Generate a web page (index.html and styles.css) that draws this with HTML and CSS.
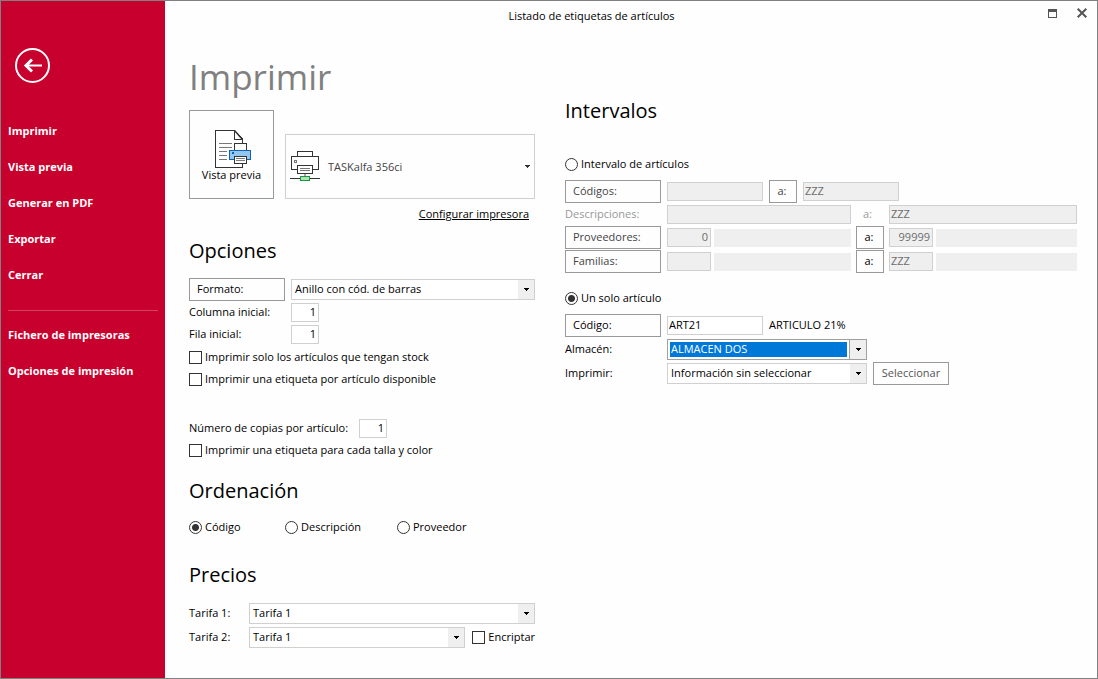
FILE: index.html
```html
<!DOCTYPE html>
<html lang="es">
<head>
<meta charset="utf-8">
<title>Listado de etiquetas de artículos</title>
<link rel="stylesheet" href="styles.css">
</head>
<body>
<div class="window">
  <aside class="sidebar">
    <button class="back" type="button" aria-label="Volver">
      <svg width="36" height="36" viewBox="0 0 36 36" fill="none" stroke="#fff">
        <circle cx="17.500" cy="17.500" r="16.500" stroke-width="2"/>
        <path d="M10 17.500H27" stroke-width="2"/>
        <path d="M17 11.500L11 17.500L17 23.500" stroke-width="3"/>
      </svg>
    </button>
    <nav class="menu">
      <a href="#">Imprimir</a>
      <a href="#">Vista previa</a>
      <a href="#">Generar en PDF</a>
      <a href="#">Exportar</a>
      <a href="#">Cerrar</a>
      <hr>
      <a href="#">Fichero de impresoras</a>
      <a href="#">Opciones de impresión</a>
    </nav>
  </aside>

  <div class="page">
    <header class="titlebar">
      <span class="caption">Listado de etiquetas de artículos</span>
      <div class="controls">
        <button type="button" aria-label="Maximizar">
          <svg width="9" height="9" viewBox="0 0 9 9" shape-rendering="crispEdges"><path d="M.5 .5h8v8h-8z" fill="none" stroke="#555"/><path d="M0 0h9v3H0z" fill="#555"/></svg>
        </button>
        <button type="button" aria-label="Cerrar">
          <svg width="10" height="10" viewBox="0 0 10 10"><path d="M.7 .7L9.300 9.300M9.300 .7L.7 9.300" stroke="#555" stroke-width="2"/></svg>
        </button>
      </div>
    </header>

    <main class="columns">
      <div class="left">
        <h1>Imprimir</h1>
        <div class="printer-row">
          <button class="preview" type="button">
            <svg width="37" height="39" viewBox="0 0 37 39" shape-rendering="crispEdges">
              <path d="M.5 .5H19L27.500 9V37.500H.5z" fill="#fff" stroke="#333"/>
              <path d="M19.500 .5V9.500H27.500" fill="#fff" stroke="#333"/>
              <path d="M19.500 .5L27.500 9.500" stroke="#333" stroke-width="1.500" shape-rendering="auto"/>
              <path d="M4 13.500H17M4 17.500H17M4 21.500H12M4 25.500H12M4 29.500H12" stroke="#777"/>
              <path d="M19.500 20.500V13.500H31.500V20.500" fill="#fff" stroke="#333"/>
              <path d="M14.500 20.500H35.500V29.500H14.500z" fill="#92c6f0" stroke="#0f65ad"/>
              <path d="M17 22h2v2h-2z" fill="#0f65ad"/>
              <path d="M19.500 26.500H31.500V33.500H19.500z" fill="#fff" stroke="#333"/>
              <path d="M21 28.500H30M21 30.500H30" stroke="#777"/>
            </svg>
            <span>Vista previa</span>
          </button>
          <button class="printer" type="button">
            <svg width="30" height="31" viewBox="0 0 30 31" shape-rendering="crispEdges">
              <path d="M7.500 5.500V.5H22.500V5.500" fill="#fff" stroke="#333"/>
              <path d="M1.500 5.500H28.500V18.500H1.500z" fill="#fff" stroke="#333"/>
              <path d="M4.500 9.500h2v2h-2z" fill="#fff" stroke="#777"/>
              <path d="M7.500 14.500H22.500V22.500H7.500z" fill="#fff" stroke="#333"/>
              <path d="M10 17.500H20M10 19.500H20" stroke="#777"/>
              <path d="M15 23V25" stroke="#aaa" stroke-width="2"/>
              <path d="M0 27.500H30" stroke="#333"/>
              <path d="M10.500 25.500H19.500V29.500H10.500z" fill="#b6dfb9" stroke="#149b40"/>
            </svg>
            <span class="printer-name">TASKalfa 356ci</span>
            <svg width="5" height="3" viewBox="0 0 5 3" shape-rendering="crispEdges"><path d="M0 0h5v1H4v1H3v1H2V2H1V1H0z" fill="#333"/></svg>
          </button>
        </div>
        <div class="link-row"><a href="#">Configurar impresora</a></div>

        <section class="options">
          <h2>Opciones</h2>
          <div class="row tall">
            <button class="label-button" type="button">Formato:</button>
            <select class="grow" aria-label="Formato"><option>Anillo con cód. de barras</option></select>
          </div>
          <div class="row"><label class="label" for="columna">Columna inicial:</label><input class="count" id="columna" type="text" value="1"></div>
          <div class="row"><label class="label" for="fila">Fila inicial:</label><input class="count" id="fila" type="text" value="1"></div>
          <div class="checks">
            <label class="row check"><input type="checkbox">Imprimir solo los artículos que tengan stock</label>
            <label class="row check"><input type="checkbox">Imprimir una etiqueta por artículo disponible</label>
          </div>
        </section>

        <section class="copies">
          <div class="row"><label class="copies-label" for="copias">Número de copias por artículo:</label><input class="count" id="copias" type="text" value="1"></div>
          <label class="row check"><input type="checkbox">Imprimir una etiqueta para cada talla y color</label>
        </section>

        <section class="sorting">
          <h2>Ordenación</h2>
          <div class="radios">
            <label class="row check"><input type="radio" name="orden" checked>Código</label>
            <label class="row check"><input type="radio" name="orden">Descripción</label>
            <label class="row check"><input type="radio" name="orden">Proveedor</label>
          </div>
        </section>

        <section class="prices">
          <h2>Precios</h2>
          <div class="row tall"><label class="price-label" for="tarifa1">Tarifa 1:</label><select class="grow" id="tarifa1"><option>Tarifa 1</option></select></div>
          <div class="row tall"><label class="price-label" for="tarifa2">Tarifa 2:</label><select class="grow" id="tarifa2"><option>Tarifa 1</option></select><label class="check encrypt"><input type="checkbox">Encriptar</label></div>
        </section>
      </div>

      <div class="right">
        <h2>Intervalos</h2>
        <section class="range">
          <label class="row check"><input type="radio" name="modo">Intervalo de artículos</label>
          <div class="row tall">
            <button class="label-button muted" type="button">Códigos:</button>
            <input class="code" type="text" aria-label="Código desde" disabled>
            <button class="to muted" type="button">a:</button>
            <input class="code" type="text" aria-label="Código hasta" value="ZZZ" disabled>
          </div>
          <div class="range-row">
            <label class="label faded" for="descripcion">Descripciones:</label>
            <input id="descripcion" type="text" disabled>
            <label class="to-text faded" for="descripcion-hasta">a:</label>
            <input id="descripcion-hasta" type="text" value="ZZZ" disabled>
          </div>
          <div class="range-row tall">
            <button class="label-button muted" type="button">Proveedores:</button>
            <div class="pair"><input class="short number" type="text" aria-label="Proveedor desde" value="0" disabled><output class="name"></output></div>
            <button class="to" type="button">a:</button>
            <div class="pair"><input class="short number" type="text" aria-label="Proveedor hasta" value="99999" disabled><output class="name"></output></div>
          </div>
          <div class="range-row tall">
            <button class="label-button muted" type="button">Familias:</button>
            <div class="pair"><input class="short" type="text" aria-label="Familia desde" disabled><output class="name"></output></div>
            <button class="to" type="button">a:</button>
            <div class="pair"><input class="short" type="text" aria-label="Familia hasta" value="ZZZ" disabled><output class="name"></output></div>
          </div>
        </section>

        <section class="single">
          <label class="row check"><input type="radio" name="modo" checked>Un solo artículo</label>
          <div class="fields">
            <div class="row tall"><button class="label-button" type="button">Código:</button><input class="code" type="text" aria-label="Código" value="ART21"><span class="article">ARTICULO 21%</span></div>
            <div class="row tall"><label class="label" for="almacen">Almacén:</label><select class="wide active" id="almacen"><option>ALMACEN DOS</option></select></div>
            <div class="row tall"><label class="label" for="imprimir">Imprimir:</label><select class="wide" id="imprimir"><option>Información sin seleccionar</option></select><button class="select-button" type="button">Seleccionar</button></div>
          </div>
        </section>
      </div>
    </main>
  </div>
</div>
</body>
</html>
```
FILE: styles.css
```css
* { box-sizing: border-box; }

body {
  margin: 0;
  font: 11px/16px "Open Sans", "Noto Sans", sans-serif;
  color: #000;
  background: #fefefe;
}

button, input, select { font: inherit; color: inherit; margin: 0; }
button { background: #fefefe; padding: 0; border: 1px solid #999; }
h1, h2 { margin: 0; font-weight: 400; }

.window {
  display: flex;
  min-height: 100vh;
  border: 1px solid #808080;
}

/* Sidebar */
.sidebar {
  flex: none;
  width: 164px;
  padding: 47px 7px 0;
  background: #c8002d;
}
.back { display: block; margin-left: 7px; border: 0; background: none; }
.back svg { display: block; }
.menu { padding-top: 29px; }
.menu a {
  display: block;
  font-size: 11px;
  font-weight: 700;
  line-height: 36px;
  color: #fff;
  text-decoration: none;
}
.menu hr { margin: 17px 0 6px; border: 0; border-top: 1px solid #d4405f; }

/* Title bar */
.page { flex: 1; min-width: 0; }
.titlebar { display: flex; height: 30px; padding-right: 10px; }
.caption { flex: 1; padding: 7px 30px 0 0; text-align: center; }
.controls { display: flex; gap: 20px; padding-top: 7px; }
.controls button { height: 10px; border: 0; }
.controls svg { display: block; }

.columns { display: flex; gap: 30px; padding: 0 20px 0 24px; }
.left { flex: 0 0 346px; }
.right { flex: 1; min-width: 0; padding-top: 64px; }

h1 { margin: 22px 0 9px; font-size: 35px; line-height: 48px; color: #808080; }
h2 { font-size: 20px; line-height: 32px; }

/* Printer picker */
.printer-row { display: flex; align-items: flex-end; gap: 11px; }
.preview {
  display: flex;
  flex-direction: column;
  align-items: center;
  width: 85px;
  height: 89px;
  padding-top: 19px;
}
.preview svg { margin-left: 4px; }
.preview span { margin-top: -2px; }
.printer {
  flex: 1;
  display: flex;
  align-items: center;
  gap: 8px;
  height: 65px;
  padding: 0 4px;
  border-color: #d0d0d0;
}
.printer-name { flex: 1; text-align: left; color: #444; }
.link-row { padding: 7px 6px 0 0; text-align: right; }
.link-row a { color: #000; }

/* Form rows */
.row { display: flex; align-items: center; gap: 6px; height: 22px; }
.tall { height: 24px; }
.grow { flex: 1; min-width: 0; }
.label { flex: none; width: 96px; }
.label-button { flex: none; width: 96px; height: 23px; padding-left: 7px; text-align: left; }
.muted { color: #444; }
.faded { color: #999; }

input[type="text"] {
  min-width: 0;
  height: 19px;
  padding: 0 2px 2px 1px;
  border: 1px solid #d0d0d0;
  background: #fff;
}
input[type="text"]:disabled { background: #efefef; color: #6d6d6d; }
input.count { width: 28px; text-align: right; }
input.code { width: 96px; }
input.short { flex: none; width: 44px; }
input.number { text-align: right; }

select {
  appearance: none;
  height: 21px;
  padding: 0 18px 0 3px;
  border: 1px solid #d0d0d0;
  border-radius: 0;
  background: #fff url("data:image/svg+xml,%3Csvg xmlns='http://www.w3.org/2000/svg' width='16' height='19' shape-rendering='crispEdges'%3E%3Cpath d='M0 0h16v19H0z' fill='%23efefef'/%3E%3Cpath d='M6 8h5v1h-1v1H9v1H8v-1H7V9H6z'/%3E%3C/svg%3E") right center no-repeat;
}
select.wide { width: 200px; }
select.active {
  border-color: #a0a0a0;
  color: #fff;
  background:
    url("data:image/svg+xml,%3Csvg xmlns='http://www.w3.org/2000/svg' width='17' height='19' shape-rendering='crispEdges'%3E%3Cpath d='M0 0h17v19H0z' fill='%23a0a0a0'/%3E%3Cpath d='M1 0h16v19H1z' fill='%23efefef'/%3E%3Cpath d='M7 8h5v1h-1v1h-1v1H9v-1H8V9H7z'/%3E%3C/svg%3E") right center no-repeat,
    linear-gradient(#0078d7, #0078d7) 2px 2px / calc(100% - 21px) 15px no-repeat,
    #fff;
}

.check { gap: 3px; }
.check input {
  appearance: none;
  flex: none;
  width: 13px;
  height: 13px;
  border: 1px solid #333;
  background: #fff;
}
.check input[type="radio"] { border-radius: 50%; }
.check input[type="radio"]:checked { background: radial-gradient(circle, #333 3px, #fff 4px); }

.options { margin-top: 13px; }
.options h2, .prices h2 { margin-bottom: 10px; }
.checks { margin-top: 1px; }
.copies { margin-top: 27px; }
.copies-label { width: 164px; }
.sorting { margin-top: 14px; }
.sorting h2 { margin-bottom: 9px; }
.radios { display: grid; grid-template-columns: 96px 112px 1fr; }
.prices { margin-top: 21px; }
.price-label { width: 54px; }
.encrypt { display: flex; align-items: center; margin-left: 1px; }

/* Ranges */
.range { margin-top: 26px; }
.range > .check { margin-bottom: 4px; }
.range-row {
  display: grid;
  grid-template-columns: 97px 184px 28px 1fr;
  column-gap: 5px;
  align-items: center;
  min-height: 22px;
}
.pair { display: flex; gap: 3px; align-items: center; min-width: 0; }
.name { flex: 1; height: 18px; margin-top: 2px; background: #efefef; }
.to { width: 28px; height: 23px; padding-right: 2px; }
.to-text { padding-left: 7px; }

.single { margin-top: 14px; }
.fields { margin-top: 4px; }
.select-button { width: 76px; height: 23px; color: #555; }
```
